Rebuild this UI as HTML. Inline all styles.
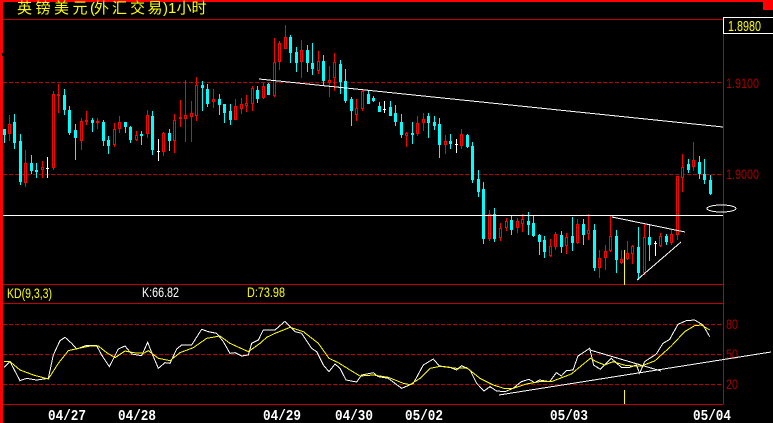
<!DOCTYPE html>
<html><head><meta charset="utf-8"><style>
html,body{margin:0;padding:0;background:#000;width:773px;height:423px;overflow:hidden}
svg{display:block}
text{font-family:"Liberation Sans",sans-serif}
</style></head><body>
<svg width="773" height="423" viewBox="0 0 773 423" xmlns="http://www.w3.org/2000/svg" shape-rendering="crispEdges">
<rect width="773" height="423" fill="#000"/>
<g fill="none" stroke="#c00000" stroke-dasharray="4 2">
<path d="M3 82.5H723M3 174.5H723M3 324.5H723M3 354.5H723M3 384.5H723"/>
</g>
<path fill="none" stroke="#c00000" d="M3 19.5H723M723.5 19V404M3 284.5H723M3 303.5H723M3 404.5H723"/>
<!-- cyan wicks -->
<path fill="none" stroke="#00ffff" d="M4.5 129V143M14.5 114V149M20.5 134V185M31.5 155V174M36.5 163V178M64.5 89V115M69.5 106V135M75.5 124V160M92.5 118V132M103.5 120V146M108.5 136V154M125.5 122V133M130.5 126V143M141.5 131V145M152.5 111V155M169.5 129V151M202.5 81V111M207.5 84V107M219.5 94V115M224.5 104V123M230.5 104V125M257.5 86V103M268.5 83V95M290.5 35V63M296.5 47V72M307.5 45V72M312.5 43V75M323.5 55V86M340.5 60V94M345.5 69V103M351.5 97V126M368.5 90V104M373.5 96V102M379.5 102V112M390.5 101V116M395.5 105V126M401.5 114V138M412.5 122V144M428.5 113V138M434.5 116V130M439.5 118V158M450.5 134V149M467.5 134V148M472.5 142V183M478.5 170V197M483.5 182V244M494.5 208V242M511.5 216V235M528.5 212V235M533.5 216V237M539.5 234V255M544.5 236V258M561.5 231V253M572.5 217V251M583.5 219V245M594.5 224V271M616.5 230V273M638.5 227V280M649.5 225V261M666.5 234V245M688.5 159V173M699.5 156V179M704.5 159V184M710.5 175V195"/>
<!-- cyan bodies -->
<path fill="none" stroke="#00ffff" stroke-width="3" d="M4.5 129V135M14.5 122V143M20.5 141V182M31.5 163V171M36.5 170V172M64.5 95V110M69.5 110V133M75.5 130V138M92.5 120V123M103.5 122V141M108.5 140V146M125.5 122V127M130.5 127V140M141.5 134V136M152.5 116V150M169.5 133V141M202.5 85V88M207.5 89V104M219.5 99V105M224.5 104V113M230.5 111V120M257.5 90V99M268.5 84V95M290.5 37V53M296.5 52V63M307.5 50V63M312.5 63V69M323.5 61V81M340.5 64V82M345.5 81V101M351.5 99V111M368.5 94V104M373.5 98V101M379.5 106V112M390.5 107V116M395.5 113V122M401.5 122V135M412.5 133V135M428.5 116V123M434.5 122V126M439.5 124V145M450.5 141V144M467.5 135V147M472.5 146V180M478.5 179V192M483.5 189V239M494.5 214V239M511.5 220V230M528.5 221V225M533.5 223V236M539.5 235V242M544.5 240V252M561.5 235V247M572.5 236V243M583.5 224V235M594.5 230V268M616.5 236V260M638.5 247V273M649.5 237V245M666.5 236V242M688.5 164V170M699.5 162V174M704.5 174V180M710.5 180V194"/>
<!-- red wicks -->
<path fill="none" stroke="#ff0000" d="M9.5 115V141M25.5 150V187M42.5 161V178M53.5 91V170M58.5 84V113M81.5 118V150M86.5 111V125M97.5 118V129M114.5 123V147M119.5 116V133M136.5 131V141M147.5 110V138M163.5 132V156M174.5 114V153M180.5 100V127M185.5 80V142M191.5 101V142M196.5 77V121M213.5 89V108M235.5 99V120M241.5 98V114M246.5 95V112M252.5 86V111M263.5 83V99M274.5 38V97M279.5 41V70M285.5 25V49M301.5 40V78M318.5 51V74M329.5 66V97M334.5 53V91M356.5 99V121M362.5 90V111M406.5 132V147M417.5 116V136M423.5 113V131M445.5 135V154M461.5 129V149M489.5 210V241M500.5 223V241M506.5 218V231M517.5 218V233M522.5 214V232M550.5 239V257M555.5 232V250M566.5 233V254M577.5 219V244M588.5 214V240M599.5 250V278M605.5 245V270M610.5 216V252M621.5 250V264M627.5 241V260M632.5 245V264M644.5 224V275M660.5 233V247M671.5 230V245M677.5 176V240M682.5 154V192M693.5 142V171"/>
<!-- red bodies -->
<path fill="#000" stroke="#ff0000" d="M8.5 124.5h2V133.5h-2zM24.5 163.5h2V182.5h-2zM41.5 167.5h2V169.5h-2zM52.5 94.5h2V167.5h-2zM57.5 94.5h2V95.5h-2zM80.5 121.5h2V140.5h-2zM85.5 120.5h2V121.5h-2zM96.5 121.5h2V122.5h-2zM113.5 129.5h2V144.5h-2zM118.5 122.5h2V128.5h-2zM135.5 135.5h2V139.5h-2zM146.5 115.5h2V133.5h-2zM162.5 133.5h2V151.5h-2zM173.5 120.5h2V140.5h-2zM179.5 117.5h2V118.5h-2zM184.5 115.5h2V118.5h-2zM190.5 113.5h2V116.5h-2zM195.5 85.5h2V115.5h-2zM212.5 99.5h2V101.5h-2zM234.5 106.5h2V119.5h-2zM240.5 104.5h2V108.5h-2zM245.5 103.5h2V105.5h-2zM251.5 88.5h2V103.5h-2zM262.5 86.5h2V97.5h-2zM273.5 62.5h2V95.5h-2zM278.5 43.5h2V61.5h-2zM284.5 37.5h2V48.5h-2zM300.5 50.5h2V61.5h-2zM317.5 61.5h2V70.5h-2zM328.5 80.5h2V82.5h-2zM333.5 62.5h2V77.5h-2zM355.5 108.5h2V114.5h-2zM361.5 91.5h2V108.5h-2zM405.5 133.5h2V135.5h-2zM416.5 123.5h2V133.5h-2zM422.5 119.5h2V122.5h-2zM444.5 141.5h2V144.5h-2zM460.5 134.5h2V145.5h-2zM488.5 214.5h2V238.5h-2zM499.5 228.5h2V237.5h-2zM505.5 221.5h2V227.5h-2zM516.5 221.5h2V227.5h-2zM521.5 219.5h2V223.5h-2zM549.5 246.5h2V255.5h-2zM554.5 234.5h2V246.5h-2zM565.5 237.5h2V245.5h-2zM576.5 224.5h2V242.5h-2zM587.5 230.5h2V233.5h-2zM598.5 258.5h2V267.5h-2zM604.5 251.5h2V257.5h-2zM609.5 236.5h2V250.5h-2zM620.5 259.5h2V262.5h-2zM626.5 253.5h2V258.5h-2zM631.5 246.5h2V253.5h-2zM643.5 237.5h2V272.5h-2zM659.5 236.5h2V245.5h-2zM670.5 234.5h2V242.5h-2zM676.5 176.5h2V234.5h-2zM681.5 167.5h2V177.5h-2zM692.5 160.5h2V166.5h-2z"/>
<!-- white doji -->
<path fill="none" stroke="#fff" d="M47.5 157V178M46 168.5H49M158.5 139V161M157 151.5H160M384.5 101V113M383 109.5H386M456.5 139V153M455 144.5H458M655.5 241V256M654 243.5H657"/>
<!-- yellow bars -->
<path fill="none" stroke="#ffff00" d="M624.5 250V285M624.5 390V404"/>
<!-- trend lines -->
<g fill="none" stroke="#fff">
<path d="M3 215.5H723"/>
<path d="M259 79L723 127"/>
<path d="M612 217L685 232"/>
<path d="M637 280L681 242"/>
<ellipse cx="721.5" cy="208.5" rx="14.5" ry="3.5"/>
<path d="M590 350L661 371"/>
</g>
<!-- KD curves -->
<g fill="none" stroke-width="3" transform="translate(0 280) scale(.33333)">
<polyline stroke="#fff" points="12,262 30,245 60,302 80,295 110,300 145,295 160,225 180,182 195,172 215,190 230,207 260,196 290,197 305,225 328,260 355,207 375,198 395,222 425,227 443,187 458,225 475,265 495,248 510,250 530,207 545,195 575,195 605,148 625,155 650,160 670,185 690,220 705,218 725,228 745,225 755,190 775,180 780,170 790,150 825,150 855,124 885,155 905,160 935,205 950,215 970,255 987,275 1005,252 1020,265 1038,300 1070,306 1085,285 1120,278 1135,290 1165,295 1205,325 1240,310 1270,255 1300,237 1318,258 1350,262 1370,270 1385,257 1410,270 1430,310 1452,333 1470,320 1490,333 1515,335 1539,325 1564,305 1587,298 1604,308 1619,300 1649,305 1669,278 1684,288 1699,272 1719,270 1734,228 1769,205 1781,255 1801,268 1834,235 1864,262 1889,262 1909,255 1919,280 1934,245 1969,222 1989,190 2009,178 2034,133 2059,122 2084,120 2109,135 2129,170"/>
<polyline stroke="#ffff00" points="12,245 30,245 60,270 100,285 145,297 175,250 205,212 235,205 270,198 295,198 320,218 345,233 375,213 400,218 430,220 445,212 475,235 510,242 540,218 580,203 620,175 660,168 690,190 745,215 780,190 800,172 825,160 870,142 910,155 955,190 987,235 1015,248 1050,270 1080,288 1120,285 1165,292 1210,310 1230,314 1260,295 1290,265 1320,259 1370,265 1400,263 1440,295 1480,315 1515,326 1539,325 1579,312 1619,305 1654,305 1714,282 1771,235 1789,245 1814,255 1839,245 1879,257 1924,258 1964,243 2014,198 2054,155 2084,137 2104,135 2129,150"/>
</g>
<!-- frame -->
<rect x="0" y="0" width="773" height="2" fill="#ff0000"/>
<rect x="0" y="0" width="3" height="423" fill="#ff0000"/>
<rect x="763" y="0" width="10" height="10" fill="#ff0000"/>
<rect x="2" y="53" width="1" height="3" fill="#000"/>
<!-- price box -->
<rect x="723" y="18" width="50" height="15" fill="#000"/>
<path fill="none" stroke="#fff" d="M723 17.5H773M723 33.5H773M723.5 17V34"/>
<g shape-rendering="auto">
<text x="17 35.5 54 72.5 90 94 112 130 147.5 163 168 176.5 191.5" y="13" fill="#ffff00" font-size="15" style='font-family:"Liberation Sans","WenQuanYi Zen Hei","Noto Sans CJK SC",sans-serif'>英镑美元(外汇交易)1小时</text>
<g font-size="14">
<text x="728" y="31" fill="#ffff00" font-size="14.5" textLength="33" lengthAdjust="spacingAndGlyphs">1.8980</text>
<text x="726" y="88" fill="#a80000" textLength="33" lengthAdjust="spacingAndGlyphs">1.9100</text>
<text x="726" y="179" fill="#a80000" textLength="33" lengthAdjust="spacingAndGlyphs">1.9000</text>
<text x="726" y="329" fill="#a80000" textLength="12" lengthAdjust="spacingAndGlyphs">80</text>
<text x="726" y="359" fill="#a80000" textLength="12" lengthAdjust="spacingAndGlyphs">50</text>
<text x="726" y="389" fill="#a80000" textLength="12" lengthAdjust="spacingAndGlyphs">20</text>
<text x="7" y="298" fill="#ffff00" textLength="45" lengthAdjust="spacingAndGlyphs">KD(9,3,3)</text>
<text x="142" y="297" fill="#fff" textLength="37" lengthAdjust="spacingAndGlyphs">K:66.82</text>
<text x="247" y="297" fill="#ffff00" textLength="38" lengthAdjust="spacingAndGlyphs">D:73.98</text>
</g>
<g font-size="15" font-weight="bold" fill="#fff">
<text x="48" y="420" textLength="38" lengthAdjust="spacingAndGlyphs" style='font-family:"Liberation Mono",monospace'>04/27</text>
<text x="118" y="420" textLength="38" lengthAdjust="spacingAndGlyphs" style='font-family:"Liberation Mono",monospace'>04/28</text>
<text x="263" y="420" textLength="38" lengthAdjust="spacingAndGlyphs" style='font-family:"Liberation Mono",monospace'>04/29</text>
<text x="335" y="420" textLength="38" lengthAdjust="spacingAndGlyphs" style='font-family:"Liberation Mono",monospace'>04/30</text>
<text x="405" y="420" textLength="38" lengthAdjust="spacingAndGlyphs" style='font-family:"Liberation Mono",monospace'>05/02</text>
<text x="550" y="420" textLength="38" lengthAdjust="spacingAndGlyphs" style='font-family:"Liberation Mono",monospace'>05/03</text>
<text x="693" y="420" textLength="38" lengthAdjust="spacingAndGlyphs" style='font-family:"Liberation Mono",monospace'>05/04</text>
</g>
</g>
<path fill="none" stroke="#fff" d="M499 395L771 352"/>
</svg>
</body></html>
